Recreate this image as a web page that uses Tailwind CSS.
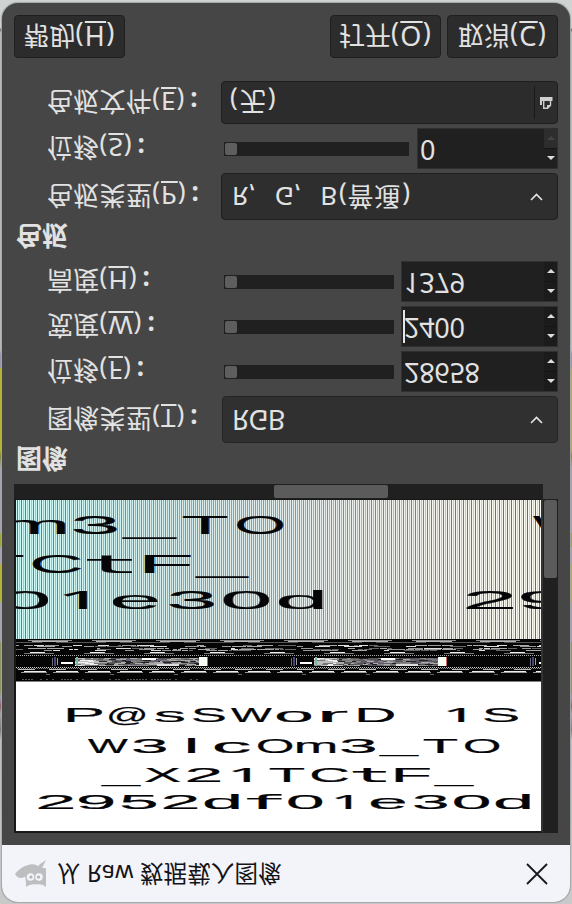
<!DOCTYPE html>
<html lang="zh-CN">
<head>
<meta charset="utf-8">
<title>Raw</title>
<script src="https://cdn.jsdelivr.net/npm/@tailwindcss/browser@4"></script>
</head>
<body class="w-[572px] h-[904px] overflow-hidden bg-[#cfd2d3] font-['Noto_Sans','Noto_Sans_CJK_SC',sans-serif]">
<div class="relative w-[572px] h-[904px] pt-[3px] pl-[2px] pr-[2px] bg-[linear-gradient(to_bottom,#cfd3d2_0,#cfd3d2_28px,#77797a_29px,#77797a_31px,#babcbd_32px,#babcbd_350px,#9697ad_354px,#9697ad_367px,#b5b526_369px,#b5b526_450px,#83862f_456px,#a3a3b0_468px,#a3a3b0_532px,#9ba338_534px,#9ba338_546px,#a3a3b5_548px,#a3a3b5_562px,#b5b526_566px,#b5b526_600px,#a3a3b5_604px,#a3a3b5_640px,#8e945a_644px,#8e945a_690px,#9b9bb0_698px,#8a5d5d_706px,#a5a7aa_714px,#77797a_730px,#c0c2c4_740px,#c8caca_904px)]">
<main class="flex flex-col w-[568px] h-[899px] rounded-2xl overflow-hidden bg-[#464646] text-[#e2e2e2] text-[26px] leading-[40px] whitespace-nowrap shadow-[0_0_1px_1px_#a5a7a8]">

  <!-- Action buttons -->
  <div class="flex h-[43px] mt-[12px] pl-[12px] pr-[12px]">
    <button class="w-[111px] h-[43px] rounded border border-[#1f1f1f] bg-[#2c2c2c] pb-[4px]"><span class="inline-block -scale-y-100">帮助<b class="font-normal tracking-[1.3px] text-[27px]">(<u class="underline decoration-2 underline-offset-[3px]">H</u>)</b></span></button>
    <button class="w-[111px] h-[43px] ml-auto rounded border border-[#1f1f1f] bg-[#2c2c2c] pb-[4px]"><span class="inline-block -scale-y-100">打开<b class="font-normal tracking-[1.3px] text-[27px]">(<u class="underline decoration-2 underline-offset-[3px]">O</u>)</b></span></button>
    <button class="w-[111px] h-[43px] ml-[6px] rounded border border-[#1f1f1f] bg-[#2c2c2c] pb-[4px]"><span class="inline-block -scale-y-100">取消<b class="font-normal tracking-[1.3px] text-[27px]">(<u class="underline decoration-2 underline-offset-[3px]">C</u>)</b></span></button>
  </div>

  <!-- Palette -->
  <div class="flex items-center h-[43px] mt-[23px] pl-[45px] pr-[12px]">
    <span class="w-[174px] mb-px tracking-[0.3px] -scale-y-100">色板文件<b class="font-normal tracking-[1px]">(<u class="underline decoration-2 underline-offset-[3px]">E</u>)</b><i class="not-italic font-bold pl-[5px]">:</i></span>
    <div class="flex items-center w-[337px] h-[43px] rounded border border-[#1f1f1f] bg-[#2c2c2c] pl-[8px]">
      <span class="mb-px tracking-[2px] -scale-y-100">(无)</span>
      <div class="ml-auto h-[33px] w-[23px] border-l border-[#191919] flex items-center justify-center">
        <svg class="shrink-0 w-[14px] h-[14px]" viewBox="0 0 14 14"><path d="M1 1h12.500v4H3v4H1z" fill="#cfcfcf"/><path d="M4.700 5v7.300h3.800l3-2.800V5" fill="none" stroke="#cfcfcf" stroke-width="1.400"/><path d="M8 12.500V9h4z" fill="#cfcfcf"/></svg>
      </div>
    </div>
  </div>
  <div class="flex items-center h-[41px] mt-[4px] pl-[45px] pr-[12px]">
    <span class="w-[177px] mb-px tracking-[0.3px] -scale-y-100">位移<b class="font-normal tracking-[1px]">(<u class="underline decoration-2 underline-offset-[3px]">S</u>)</b><i class="not-italic font-bold pl-[5px]">:</i></span>
    <div class="w-[185px] h-[14px] bg-[#202020] p-px"><div class="w-[12px] h-[12px] rounded-xs bg-[#5e5e5e]"></div></div>
    <div class="flex w-[141px] h-[41px] ml-auto bg-[#202020] border border-[#303030]">
      <span class="flex-1 pl-[2px] mt-px h-[40px] text-[27px] -scale-y-100">0</span>
      <div class="w-[13px] flex flex-col">
        <div class="h-[20px] flex items-center justify-center bg-[#2d2d2d] border-b border-[#151515]"><svg class="w-[8px] h-[4px]" viewBox="0 0 8 4"><path d="M0 4L4 0l4 4z" fill="#444"/></svg></div>
        <div class="h-[20px] flex items-center justify-center"><svg class="w-[8px] h-[4px]" viewBox="0 0 8 4"><path d="M0 0h8L4 4z" fill="#ddd"/></svg></div>
      </div>
    </div>
  </div>
  <div class="flex items-center h-[47px] mt-[4px] pl-[45px] pr-[12px]">
    <span class="w-[174px] mb-px tracking-[0.3px] -scale-y-100">色板类型<b class="font-normal tracking-[1px]">(<u class="underline decoration-2 underline-offset-[3px]">P</u>)</b><i class="not-italic font-bold pl-[5px]">:</i></span>
    <div class="flex items-center w-[337px] h-[47px] rounded border border-[#1f1f1f] bg-[#2e2e2e] pl-[10px] pr-[14px]">
      <span class="tracking-[0.8px] -scale-y-100">R,<i class="pl-[18px] not-italic">G,</i><i class="pl-[18px] not-italic">B<b class="font-normal pl-[1px]">(普通</b><b class="font-normal pl-[1px]">)</b></i></span>
      <svg class="ml-auto w-[13px] h-[8px]" viewBox="0 0 13 8"><path d="M1 7l5.500-5.500L12 7" fill="none" stroke="#e6e6e6" stroke-width="1.600"/></svg>
    </div>
  </div>
  <h2 class="h-[41px] pl-[14px] font-bold leading-[32px]"><span class="inline-block -scale-y-100">色板</span></h2>

  <!-- Image -->
  <div class="flex items-center h-[41px] pl-[45px] pr-[12px]">
    <span class="w-[177px] mb-px tracking-[0.3px] -scale-y-100">高度<b class="font-normal tracking-[1px]">(<u class="underline decoration-2 underline-offset-[3px]">H</u>)</b><i class="not-italic font-bold pl-[5px]">:</i></span>
    <div class="w-[170px] h-[14px] bg-[#202020] p-px"><div class="w-[12px] h-[12px] rounded-xs bg-[#5e5e5e]"></div></div>
    <div class="flex w-[157px] h-[41px] ml-auto bg-[#202020] border border-[#303030]">
      <span class="flex-1 pl-[2px] mt-px h-[40px] text-[27px] tracking-[-0.3px] -scale-y-100">1379</span>
      <div class="w-[13px] flex flex-col bg-[#1b1b1b]">
        <div class="h-[20px] flex items-center justify-center border-b border-[#151515]"><svg class="w-[8px] h-[4px]" viewBox="0 0 8 4"><path d="M0 4L4 0l4 4z" fill="#ddd"/></svg></div>
        <div class="h-[20px] flex items-center justify-center"><svg class="w-[8px] h-[4px]" viewBox="0 0 8 4"><path d="M0 0h8L4 4z" fill="#ddd"/></svg></div>
      </div>
    </div>
  </div>
  <div class="flex items-center h-[41px] mt-[4px] pl-[45px] pr-[12px]">
    <span class="w-[177px] mb-px tracking-[0.3px] -scale-y-100">宽度<b class="font-normal tracking-[1px]">(<u class="underline decoration-2 underline-offset-[3px]">W</u>)</b><i class="not-italic font-bold pl-[5px]">:</i></span>
    <div class="w-[170px] h-[14px] bg-[#202020] p-px"><div class="w-[12px] h-[12px] rounded-xs bg-[#5e5e5e]"></div></div>
    <div class="flex w-[157px] h-[41px] ml-auto bg-[#202020] border border-[#303030] pl-px">
      <div class="w-[2px] h-[33px] mt-[3px] bg-[#e6e6e6]"></div>
      <span class="flex-1 -ml-px mt-px h-[40px] text-[27px] tracking-[-0.3px] -scale-y-100">2400</span>
      <div class="w-[13px] flex flex-col bg-[#1b1b1b]">
        <div class="h-[20px] flex items-center justify-center border-b border-[#151515]"><svg class="w-[8px] h-[4px]" viewBox="0 0 8 4"><path d="M0 4L4 0l4 4z" fill="#ddd"/></svg></div>
        <div class="h-[20px] flex items-center justify-center"><svg class="w-[8px] h-[4px]" viewBox="0 0 8 4"><path d="M0 0h8L4 4z" fill="#ddd"/></svg></div>
      </div>
    </div>
  </div>
  <div class="flex items-center h-[41px] mt-[4px] pl-[45px] pr-[12px]">
    <span class="w-[177px] mb-px tracking-[0.3px] -scale-y-100">位移<b class="font-normal tracking-[1px]">(<u class="underline decoration-2 underline-offset-[3px]">F</u>)</b><i class="not-italic font-bold pl-[5px]">:</i></span>
    <div class="w-[170px] h-[14px] bg-[#202020] p-px"><div class="w-[12px] h-[12px] rounded-xs bg-[#5e5e5e]"></div></div>
    <div class="flex w-[157px] h-[41px] ml-auto bg-[#202020] border border-[#303030]">
      <span class="flex-1 pl-[2px] mt-px h-[40px] text-[27px] tracking-[-0.3px] -scale-y-100">28658</span>
      <div class="w-[13px] flex flex-col bg-[#1b1b1b]">
        <div class="h-[20px] flex items-center justify-center border-b border-[#151515]"><svg class="w-[8px] h-[4px]" viewBox="0 0 8 4"><path d="M0 4L4 0l4 4z" fill="#ddd"/></svg></div>
        <div class="h-[20px] flex items-center justify-center"><svg class="w-[8px] h-[4px]" viewBox="0 0 8 4"><path d="M0 0h8L4 4z" fill="#ddd"/></svg></div>
      </div>
    </div>
  </div>
  <div class="flex items-center h-[47px] mt-[4px] pl-[45px] pr-[12px]">
    <span class="w-[175px] mb-[2px] tracking-[0.3px] -scale-y-100">图像类型<b class="font-normal tracking-[1px]">(<u class="underline decoration-2 underline-offset-[3px]">T</u>)</b><i class="not-italic font-bold pl-[5px]">:</i></span>
    <div class="flex items-center w-[336px] h-[47px] rounded border border-[#242424] bg-[#303030] pl-[9px] pr-[14px]">
      <span class="-scale-y-100 text-[27px] tracking-[-0.3px]">RGB</span>
      <svg class="ml-auto w-[13px] h-[8px]" viewBox="0 0 13 8"><path d="M1 7l5.500-5.500L12 7" fill="none" stroke="#e6e6e6" stroke-width="1.600"/></svg>
    </div>
  </div>
  <h2 class="h-[41px] pl-[14px] font-bold leading-[31px]"><span class="inline-block -scale-y-100">图像</span></h2>

  <!-- Preview with scrollbars -->
  <div class="w-[529px] h-[15px] ml-[12px] bg-[#202020] pl-[260px] pt-px"><div class="w-[114px] h-[13px] rounded-xs bg-[#5b5b5b]"></div></div>
  <div class="flex h-[334px] ml-[12px]">
    <div class="w-[529px] h-[334px] border-t border-b-2 border-l-2 border-r-2 border-[#181818] border-r-[#343434] bg-white">
      <svg id="preview" class="block w-[525px] h-[331px]" viewBox="16 500 525 331">
        <g id="stripes" shape-rendering="crispEdges"></g>
        <rect x="16" y="639" width="525" height="42.500" fill="#050505"/>
        <g id="noise" shape-rendering="crispEdges"></g>
        <g id="glyphs" fill="#050508" stroke="#050508"></g>
      </svg>
    </div>
    <div class="w-[15px] h-[334px] bg-[#202020] p-px"><div class="w-[13px] h-[78px] rounded-xs bg-[#5b5b5b]"></div></div>
  </div>

  <!-- Title bar -->
  <div class="flex items-center h-[57px] mt-auto pl-[13px] pr-[22px] bg-[#f3f3fa] text-[#141418] text-[23.5px]">
    <svg class="w-[33px] h-[29px]" viewBox="0 0 33 29"><path d="M0 15C3 11 8 7 15 5.500c4-1 7 .5 10 2.500l6 1.500V28c-3-2.500-6-3-10-2.500-4-.5-7 .5-10 2.500 0-5 0-7-1-10.500-3 2.500-8 2-10-2.500z" fill="#bdbec0"/><path d="M22 9l3-4 6-4-3 6-3 4z" fill="#bdbec0"/><circle cx="15.500" cy="18" r="3.800" fill="#f3f3fa"/><circle cx="24" cy="18" r="3.800" fill="#f3f3fa"/><circle cx="16" cy="18" r="1.600" fill="#b2b2b4"/><circle cx="23.500" cy="18" r="1.600" fill="#b2b2b4"/></svg>
    <span class="ml-[9px] tracking-[0.15px] -scale-y-100">从 Raw 数据载入图像</span>
    <svg class="ml-auto w-[22px] h-[22px]" viewBox="0 0 22 22"><path d="M1 1l20 20M21 1L1 21" stroke="#18181c" stroke-width="1.800"/></svg>
  </div>
</main>
</div>
<script>
const NS = 'http://www.w3.org/2000/svg';
const ctx = document.createElement('canvas').getContext('2d');
const addRect = (g, x, y, w, h, f) => {
  const e = document.createElementNS(NS, 'rect');
  e.setAttribute('x', x); e.setAttribute('y', y); e.setAttribute('width', w); e.setAttribute('height', h); e.setAttribute('fill', f);
  g.appendChild(e);
};

// Vertical colour fringes, repeating every four pixels, drifting in hue from left to right
const ramp = (stops, t) => {
  const p = Math.min(t, 0.9999) * (stops.length - 1), i = Math.floor(p), f = p - i;
  return `rgb(${stops[i].map((v, n) => Math.round(v + (stops[i + 1][n] - v) * f)).join(',')})`;
};
const columns = [
  [[196,250,248],[204,236,244],[238,240,240],[250,250,246]],
  [[178,92,88],[190,132,104],[206,178,130],[236,220,100]],
  [[214,250,244],[226,232,222],[238,238,232],[248,246,232]],
  [[166,196,198],[120,176,204],[108,134,190],[88,100,184]]
];
const stripes = document.getElementById('stripes');
for (let x = 16; x < 541; x++) addRect(stripes, x, 500, 1, 139, ramp(columns[x % 4], (x - 16) / 525));

// Each row: font size, baseline, underscore y, then [char, ink left, ink right]
const rows = [
  [25, 533.5, 537.5, [['m',3,65],['3',73,117],['_',122,177],['T',183,227],['O',237,283],['W',533,590]]],
  [25, 573, 577, [['T',-20,23],['C',33,81],['t',87,132],['F',145,191],['_',195,249]]],
  [25, 609, 613, [['0',2,48],['1',63,87],['e',113,158],['3',169,214],['0',223,269],['d',279,323],['2',467,513],['9',521,565]]],
  [19.5, 722, 726, [['P',68,102],['@',109,145],['s',155,184],['S',193,225],['W',231,272],['o',277,311],['r',322,347],['D',359,394],['1',447,464],['S',484,518]]],
  [19.5, 752.5, 755.5, [['W',88,128],['3',133,166],['l',188,195],['c',215,250],['O',258,292],['m',297,335],['3',341,375],['_',379,419],['T',424,457],['O',465,499]]],
  [19.5, 782, 784.7, [['_',101,141],['X',145,180],['2',188,220],['1',232,250],['T',270,304],['C',312,348],['t',353,386],['F',396,430],['_',434,474]]],
  [19.5, 809, 812, [['2',39,73],['9',79,113],['5',122,156],['2',164,197],['d',205,239],['f',247,281],['0',288,322],['1',335,351],['e',371,405],['3',414,447],['0',454,489],['d',496,530]]]
];
// Flagged "1" without a foot, and wide-armed "t" and "f"
const faces = { '1': 'Noto Sans', 't': 'DejaVu Sans Mono', 'f': 'DejaVu Sans Mono' };
const glyphs = document.getElementById('glyphs');
for (const [size, base, uy, chars] of rows) {
  for (const [ch, l, r] of chars) {
    const face = faces[ch] || 'Liberation Sans';
    ctx.font = `100px "${face}"`;
    const m = ctx.measureText(ch), k = size / 100;
    const left = -m.actualBoundingBoxLeft * k;
    const sx = (r - l) / ((m.actualBoundingBoxRight + m.actualBoundingBoxLeft) * k);
    const t = document.createElementNS(NS, 'text');
    const y = ch === '_' ? uy - size * 0.16 : base;
    t.setAttribute('transform', `translate(${l - left * sx} ${y}) scale(${sx} 1)`);
    t.setAttribute('font-size', size);
    t.setAttribute('font-family', `${face}, sans-serif`);
    t.setAttribute('stroke-width', ch === '_' ? 0 : 0.2);
    t.textContent = ch;
    glyphs.appendChild(t);
  }
}

// Corrupted-data band
let seed = 11;
const rnd = () => (seed = (seed * 16807) % 2147483647) / 2147483647;
const noise = document.getElementById('noise');
const rect = (x, y, w, h, f) => addRect(noise, x, y, w, h, f);
const streaks = (y, period, off, len, f) => { for (let x = 16 + off - period; x < 541; x += period) rect(x, y, len, 1, f); };
streaks(640, 64, 12, 44, '#8a8a8a');
streaks(641, 64, 16, 36, '#b4b4b4');
streaks(642, 64, 40, 50, '#555');
for (const y of [645, 646, 648, 649, 650]) {
  for (let x = 16; x < 541;) {
    const w = 3 + Math.floor(rnd() * 16);
    if (rnd() < 0.55) rect(x, y, w, 1, ['#ddd', '#999', '#666', '#aaa'][Math.floor(rnd() * 4)]);
    x += w + 1;
  }
}
streaks(652, 60, 14, 15, '#eee');
streaks(653, 60, 8, 30, '#777');
for (let x = 16; x < 541; x += 2) { rect(x, 655, 1, 1, '#aaa'); rect(x, 667, 1, 1, '#ccc'); rect(x + 1, 668, 1, 1, '#888'); }
for (const o of [52, 291, 530]) {
  rect(o, 658, 1, 8, '#667'); rect(o + 2, 657, 2, 9, '#447'); rect(o + 5, 658, 1, 7, '#999');
  rect(o + 9, 662, 12, 2, '#fff');
  for (let y = 658; y < 666; y++) for (let x = o + 23; x < o + 147;) {
    const w = 2 + Math.floor(rnd() * 9);
    const g = x < o + 45 ? ['#eee', '#bbb', '#777'] : ['#888', '#555', '#777', '#222', '#aaa', '#665a70'];
    rect(x, y, w, 1, g[Math.floor(rnd() * g.length)]);
    x += w;
  }
  rect(o + 24, 657, 2, 9, '#7ab8a0');
  rect(o + 90, 658, 14, 2, '#fff'); rect(o + 105, 664, 22, 2, '#ddd');
  rect(o + 147, 657, 8, 9, '#f8fff4'); rect(o + 155, 657, 1, 9, '#c66');
}
streaks(669, 31, 2, 17, '#bbb');
streaks(671, 32, 8, 22, '#eee');
streaks(672, 32, 5, 26, '#999');
streaks(674, 64, 30, 4, '#666');
for (let x = 16; x < 200; x += 3) if (rnd() < 0.5) rect(x, 679, 2, 1, '#555');
</script>
</body>
</html>
